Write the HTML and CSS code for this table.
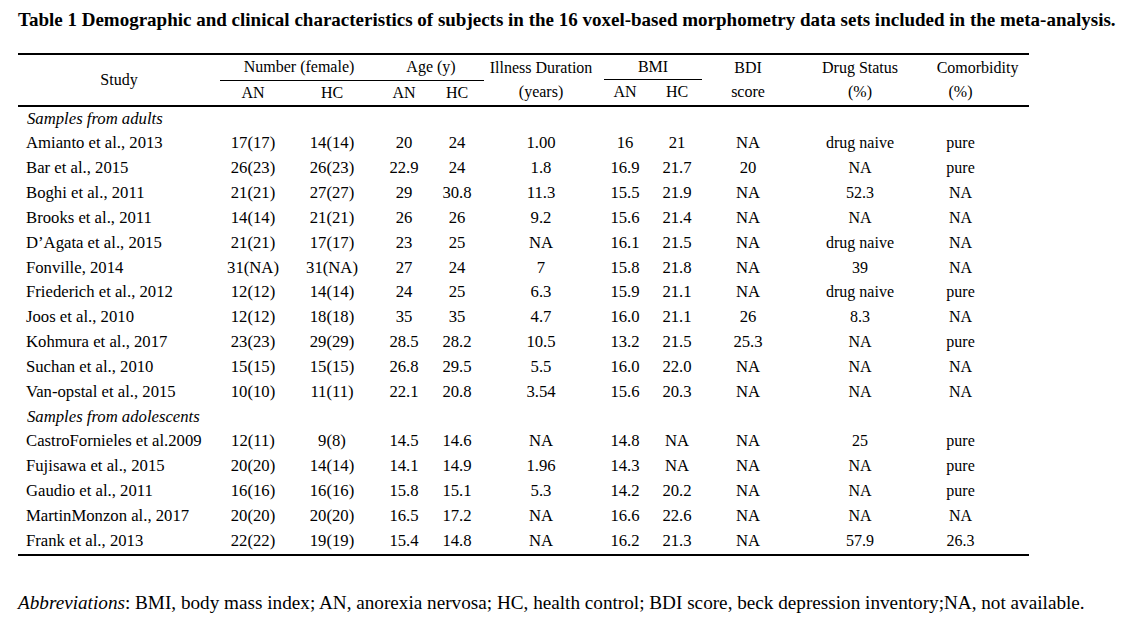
FILE: index.html
```html
<!DOCTYPE html>
<html>
<head>
<meta charset="utf-8">
<link rel="stylesheet" href="styles.css">
</head>
<body>
<div class="page">
  <h1 class="title">Table 1 Demographic and clinical characteristics of subjects in the 16 voxel-based morphometry data sets included in the meta-analysis.</h1>
  <table class="tbl">
    <colgroup>
      <col class="c-study"><col class="c-an"><col class="c-hc"><col class="c-aan"><col class="c-ahc"><col class="c-ill"><col class="c-ban"><col class="c-bhc"><col class="c-bdi"><col class="c-drug"><col class="c-com">
    </colgroup>
    <thead>
      <tr class="h1">
        <th rowspan="2" class="study-h">Study</th>
        <th colspan="2" class="grp">Number (female)</th>
        <th colspan="2" class="grp">Age (y)</th>
        <th>Illness Duration</th>
        <th colspan="2" class="grp-bmi"><span class="bmi-line">BMI</span></th>
        <th>BDI</th>
        <th>Drug Status</th>
        <th>Comorbidity</th>
      </tr>
      <tr class="h2">
        <th>AN</th><th>HC</th><th>AN</th><th>HC</th><th>(years)</th><th>AN</th><th>HC</th><th>score</th><th>(%)</th><th class="com">(%)</th>
      </tr>
    </thead>
    <tbody>
      <tr class="group"><td colspan="11">Samples from adults</td></tr>
      <tr><td>Amianto et al., 2013</td><td>17(17)</td><td>14(14)</td><td>20</td><td>24</td><td>1.00</td><td>16</td><td>21</td><td>NA</td><td class="sm">drug naive</td><td class="com sm">pure</td></tr>
      <tr><td>Bar et al., 2015</td><td>26(23)</td><td>26(23)</td><td>22.9</td><td>24</td><td>1.8</td><td>16.9</td><td>21.7</td><td>20</td><td class="sm">NA</td><td class="com sm">pure</td></tr>
      <tr><td>Boghi et al., 2011</td><td>21(21)</td><td>27(27)</td><td>29</td><td>30.8</td><td>11.3</td><td>15.5</td><td>21.9</td><td>NA</td><td class="sm">52.3</td><td class="com sm">NA</td></tr>
      <tr><td>Brooks et al., 2011</td><td>14(14)</td><td>21(21)</td><td>26</td><td>26</td><td>9.2</td><td>15.6</td><td>21.4</td><td>NA</td><td class="sm">NA</td><td class="com sm">NA</td></tr>
      <tr><td>D’Agata et al., 2015</td><td>21(21)</td><td>17(17)</td><td>23</td><td>25</td><td>NA</td><td>16.1</td><td>21.5</td><td>NA</td><td class="sm">drug naive</td><td class="com sm">NA</td></tr>
      <tr><td>Fonville, 2014</td><td>31(NA)</td><td>31(NA)</td><td>27</td><td>24</td><td>7</td><td>15.8</td><td>21.8</td><td>NA</td><td class="sm">39</td><td class="com sm">NA</td></tr>
      <tr><td>Friederich et al., 2012</td><td>12(12)</td><td>14(14)</td><td>24</td><td>25</td><td>6.3</td><td>15.9</td><td>21.1</td><td>NA</td><td class="sm">drug naive</td><td class="com sm">pure</td></tr>
      <tr><td>Joos et al., 2010</td><td>12(12)</td><td>18(18)</td><td>35</td><td>35</td><td>4.7</td><td>16.0</td><td>21.1</td><td>26</td><td class="sm">8.3</td><td class="com sm">NA</td></tr>
      <tr><td>Kohmura et al., 2017</td><td>23(23)</td><td>29(29)</td><td>28.5</td><td>28.2</td><td>10.5</td><td>13.2</td><td>21.5</td><td>25.3</td><td class="sm">NA</td><td class="com sm">pure</td></tr>
      <tr><td>Suchan et al., 2010</td><td>15(15)</td><td>15(15)</td><td>26.8</td><td>29.5</td><td>5.5</td><td>16.0</td><td>22.0</td><td>NA</td><td class="sm">NA</td><td class="com sm">NA</td></tr>
      <tr><td>Van-opstal et al., 2015</td><td>10(10)</td><td>11(11)</td><td>22.1</td><td>20.8</td><td>3.54</td><td>15.6</td><td>20.3</td><td>NA</td><td class="sm">NA</td><td class="com sm">NA</td></tr>
      <tr class="group"><td colspan="11">Samples from adolescents</td></tr>
      <tr><td>CastroFornieles et al.2009</td><td>12(11)</td><td>9(8)</td><td>14.5</td><td>14.6</td><td>NA</td><td>14.8</td><td>NA</td><td>NA</td><td class="sm">25</td><td class="com sm">pure</td></tr>
      <tr><td>Fujisawa et al., 2015</td><td>20(20)</td><td>14(14)</td><td>14.1</td><td>14.9</td><td>1.96</td><td>14.3</td><td>NA</td><td>NA</td><td class="sm">NA</td><td class="com sm">pure</td></tr>
      <tr><td>Gaudio et al., 2011</td><td>16(16)</td><td>16(16)</td><td>15.8</td><td>15.1</td><td>5.3</td><td>14.2</td><td>20.2</td><td>NA</td><td class="sm">NA</td><td class="com sm">pure</td></tr>
      <tr><td>MartinMonzon al., 2017</td><td>20(20)</td><td>20(20)</td><td>16.5</td><td>17.2</td><td>NA</td><td>16.6</td><td>22.6</td><td>NA</td><td class="sm">NA</td><td class="com sm">NA</td></tr>
      <tr><td>Frank et al., 2013</td><td>22(22)</td><td>19(19)</td><td>15.4</td><td>14.8</td><td>NA</td><td>16.2</td><td>21.3</td><td>NA</td><td class="sm">57.9</td><td class="com sm">26.3</td></tr>
    </tbody>
  </table>
  <p class="foot"><em>Abbreviations</em>: BMI, body mass index; AN, anorexia nervosa; HC, health control; BDI score, beck depression inventory;NA, not available.</p>
</div>
</body>
</html>
```

FILE: styles.css
```css
html, body {
  margin: 0;
  padding: 0;
  background: #fff;
}
.page {
  padding: 0 0 0 18px;
  font-family: "Liberation Serif", "Times New Roman", serif;
  color: #000;
}
.title {
  margin: 9px 0 0 0;
  font-size: 19px;
  line-height: 22px;
  font-weight: bold;
  white-space: nowrap;
}
.tbl {
  margin-top: 22px;
  width: 1011px;
  border-collapse: collapse;
  table-layout: fixed;
  font-size: 16.7px;
}
.c-study { width: 202px; }
.c-an { width: 66px; }
.c-hc { width: 92px; }
.c-aan { width: 52px; }
.c-ahc { width: 54px; }
.c-ill { width: 114px; }
.c-ban { width: 54px; }
.c-bhc { width: 50px; }
.c-bdi { width: 92px; }
.c-drug { width: 132px; }
.c-com { width: 103px; }
.tbl th {
  font-weight: normal;
  font-size: 16px;
  padding: 0;
  text-align: center;
  white-space: nowrap;
  line-height: 24px;
}
.tbl thead tr.h1 th {
  border-top: 2px solid #000;
}
.tbl thead tr.h2 th {
  border-bottom: 2px solid #000;
  line-height: 24px;
}
.tbl thead tr.h2 th.com {
  padding-right: 34px;
}
.tbl th.study-h {
  border-bottom: 2px solid #000;
}
.tbl th.grp {
  border-bottom: 1.5px solid #000;
}
.tbl th.grp-bmi {
  padding-left: 6px;
}
.bmi-line {
  display: block;
  border-bottom: 1.5px solid #000;
}
.tbl td {
  padding: 0;
  text-align: center;
  white-space: nowrap;
  line-height: 24.85px;
  height: 24.85px;
}
.tbl td:first-child {
  text-align: left;
  padding-left: 8px;
}
.tbl td.sm {
  font-size: 16px;
}
.tbl td.com {
  padding-right: 34px;
}
.tbl tr.group td {
  font-style: italic;
  padding-left: 9px;
}
.tbl tbody tr:last-child td {
  border-bottom: 2px solid #000;
}
.foot {
  margin: 36px 0 0 0;
  font-size: 19.2px;
  line-height: 22px;
  white-space: nowrap;
}
```
